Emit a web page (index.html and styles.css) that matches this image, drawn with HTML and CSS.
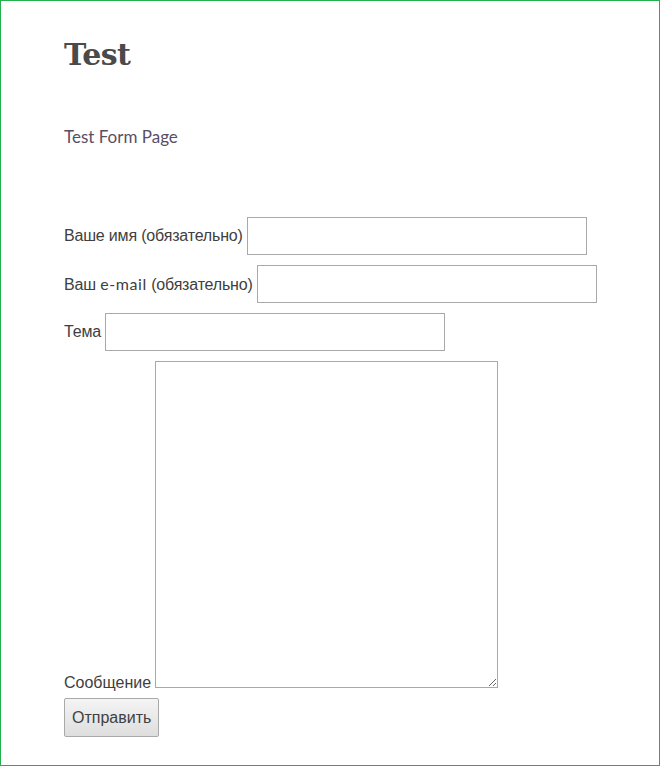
FILE: index.html
```html
<!DOCTYPE html>
<html lang="ru">
<head>
<meta charset="utf-8">
<title>Test</title>
<link rel="stylesheet" href="styles.css">
</head>
<body>
<div class="page">
  <h1 class="title">Test</h1>
  <p class="lead">Test Form Page</p>
  <form class="form">
    <div class="row"><span class="label">Ваше имя (обязательно)</span><input class="field" type="text"></div>
    <div class="row"><span class="label">Ваш <span class="lat">e-mail</span> (обязательно)</span><input class="field" type="email"></div>
    <div class="row"><span class="label">Тема</span><input class="field" type="text"></div>
    <div class="row row-end"><span class="label">Сообщение</span><textarea class="area"></textarea></div>
    <div class="row"><button class="btn" type="button">Отправить</button></div>
  </form>
</div>
</body>
</html>
```
FILE: styles.css
```css
html, body {
  margin: 0;
  padding: 0;
  background: #fff;
}
.page {
  box-sizing: border-box;
  width: 660px;
  height: 766px;
  border: 1px solid #22b14c;
  padding: 30px 0 0 63px;
  font-family: "Liberation Sans", Arial, sans-serif;
  color: #404040;
}
.title {
  margin: 0;
  font-family: "DejaVu Serif", serif;
  font-weight: bold;
  font-size: 30px;
  line-height: 48px;
  color: #4a4a4a;
  letter-spacing: -0.6px;
}
.lead {
  margin: 46px 0 0 0;
  font-family: "Lato", "Liberation Sans", sans-serif;
  font-size: 17px;
  line-height: 24px;
  color: #5a4e66;
}
.form {
  margin-top: 68px;
  display: flex;
  flex-direction: column;
  gap: 10px;
}
.row {
  display: flex;
  align-items: center;
  gap: 4px;
}
.row-end {
  align-items: flex-end;
}
.label {
  font-size: 16px;
  line-height: 20px;
  color: #404040;
  letter-spacing: -0.18px;
}
.row-end .label {
  line-height: 16px;
  margin-bottom: -3px;
  letter-spacing: 0;
}
.lat {
  font-family: "Lato", "Liberation Sans", sans-serif;
  letter-spacing: 0.6px;
}
.field {
  box-sizing: border-box;
  width: 340px;
  height: 38px;
  margin: 0;
  border: 1px solid #a9a9a9;
  background: #fff;
  padding: 4px 6px;
  font: inherit;
}
.area {
  box-sizing: border-box;
  width: 343px;
  height: 327px;
  margin: 0;
  border: 1px solid #a9a9a9;
  background: #fff;
  font: inherit;
  resize: both;
}
.btn {
  box-sizing: border-box;
  height: 39px;
  width: 95px;
  margin: 0;
  padding: 0 7px;
  border: 1px solid #a9a9a9;
  border-radius: 2px;
  background: linear-gradient(#f4f4f4, #dedede);
  font-family: "Liberation Sans", Arial, sans-serif;
  font-size: 16px;
  color: #404040;
}
```
